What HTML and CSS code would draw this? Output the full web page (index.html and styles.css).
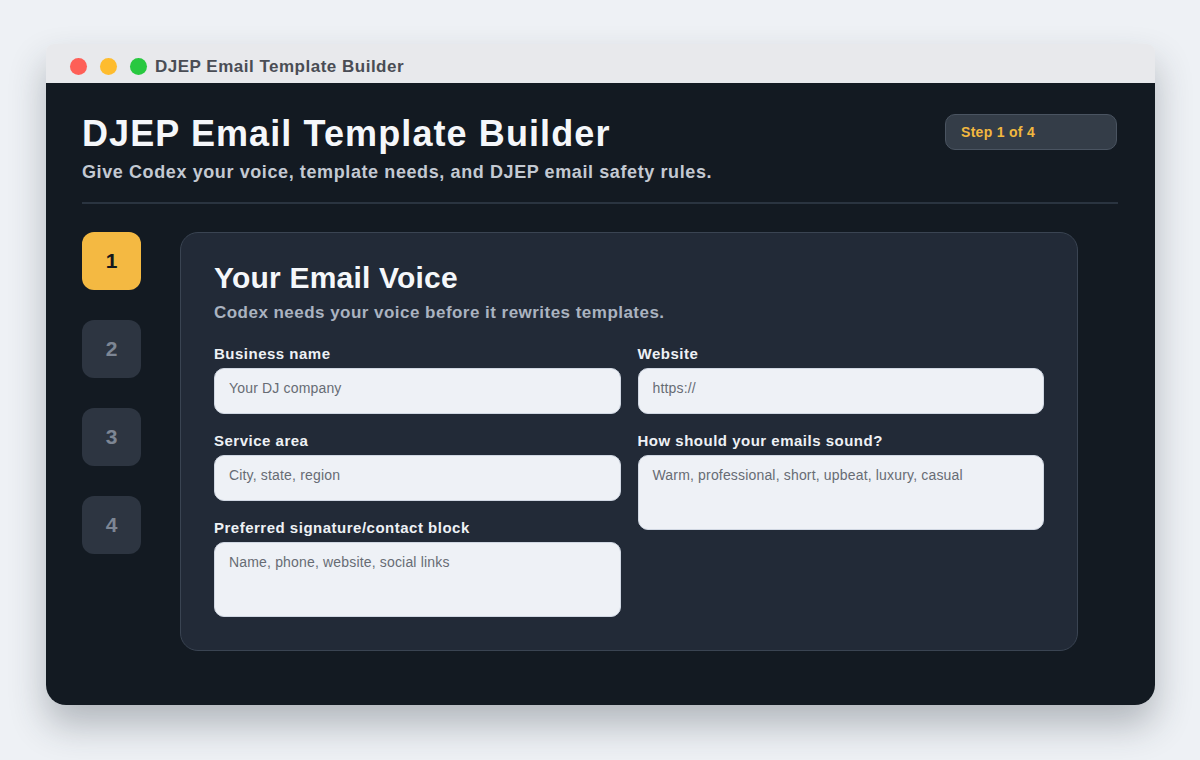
FILE: index.html
```html
<!DOCTYPE html>
<html lang="en">
<head>
  <meta charset="utf-8">
  <title>DJEP Email Template Builder</title>
  <link rel="stylesheet" href="styles.css">
</head>
<body>
  <div class="window">
    <div class="titlebar">
      <span class="dot red"></span>
      <span class="dot yellow"></span>
      <span class="dot green"></span>
      <span class="titlebar-text">DJEP Email Template Builder</span>
    </div>
    <div class="app">
      <header class="app-header">
        <div>
          <h1>DJEP Email Template Builder</h1>
          <p class="lead">Give Codex your voice, template needs, and DJEP email safety rules.</p>
        </div>
        <div class="step-pill">Step 1 of 4</div>
      </header>
      <div class="main">
        <nav class="steps">
          <div class="step active">1</div>
          <div class="step">2</div>
          <div class="step">3</div>
          <div class="step">4</div>
        </nav>
        <section class="card">
          <h2>Your Email Voice</h2>
          <p class="card-sub">Codex needs your voice before it rewrites templates.</p>
          <div class="fields">
            <div class="col">
              <label class="field">
                <span>Business name</span>
                <input type="text" placeholder="Your DJ company">
              </label>
              <label class="field">
                <span>Service area</span>
                <input type="text" placeholder="City, state, region">
              </label>
              <label class="field">
                <span>Preferred signature/contact block</span>
                <textarea placeholder="Name, phone, website, social links"></textarea>
              </label>
            </div>
            <div class="col">
              <label class="field">
                <span>Website</span>
                <input type="text" placeholder="https://">
              </label>
              <label class="field">
                <span>How should your emails sound?</span>
                <textarea placeholder="Warm, professional, short, upbeat, luxury, casual"></textarea>
              </label>
            </div>
          </div>
        </section>
      </div>
    </div>
  </div>
</body>
</html>
```

FILE: styles.css
```css
body {
  margin: 0;
  padding: 44px 0 55px 46px;
  background: #eef1f5;
  font-family: "Liberation Sans", Arial, sans-serif;
}

.window {
  width: 1109px;
  border-radius: 8px 8px 20px 20px;
  overflow: hidden;
  box-shadow: 0 20px 36px rgba(40, 50, 60, 0.3);
}

.titlebar {
  display: flex;
  align-items: center;
  height: 39px;
  box-sizing: border-box;
  padding: 6px 0 0 24px;
  background: #e8e9ec;
}

.dot {
  width: 17px;
  height: 17px;
  border-radius: 50%;
  margin-right: 13px;
}

.red { background: #fe5f57; }
.yellow { background: #febc2e; }
.green { background: #28c840; }

.titlebar-text {
  margin-left: -5px;
  font-size: 17px;
  letter-spacing: 0.5px;
  font-weight: bold;
  color: #4a4d55;
}

.app {
  background: #131a22;
  height: 622px;
  padding: 0 37px 0 36px;
  box-sizing: border-box;
}

.app-header {
  display: flex;
  justify-content: space-between;
  align-items: flex-start;
  padding-top: 29px;
  padding-bottom: 19px;
  border-bottom: 2px solid #2a3440;
}

.app-header h1 {
  margin: 0;
  font-size: 36px;
  letter-spacing: 1.1px;
  line-height: 44px;
  color: #f5f7fa;
}

.lead {
  margin: 6px 0 0;
  font-size: 18px;
  letter-spacing: 0.6px;
  font-weight: bold;
  color: #c3c9d2;
}

.step-pill {
  width: 172px;
  height: 36px;
  box-sizing: border-box;
  margin: 2px 1px 0 0;
  padding: 0 15px;
  line-height: 34px;
  background: #343d48;
  border: 1px solid #4a5461;
  border-radius: 10px;
  font-size: 14px;
  letter-spacing: 0.3px;
  font-weight: bold;
  color: #f2b83f;
}

.main {
  display: flex;
  align-items: flex-start;
  gap: 39px;
  padding-top: 28px;
}

.steps {
  display: flex;
  flex-direction: column;
  gap: 30px;
}

.step {
  width: 59px;
  height: 58px;
  line-height: 58px;
  border-radius: 12px;
  background: #2d3541;
  color: #7d8694;
  text-align: center;
  font-size: 21px;
  font-weight: bold;
}

.step.active {
  background: #f4b942;
  color: #14171c;
}

.card {
  width: 898px;
  box-sizing: border-box;
  padding: 27px 33px 33px;
  background: #222a37;
  border: 1px solid #3a4452;
  border-radius: 18px;
}

.card h2 {
  margin: 0;
  font-size: 30px;
  letter-spacing: 0.2px;
  line-height: 36px;
  color: #f5f7fa;
}

.card-sub {
  margin: 7px 0 0;
  font-size: 17px;
  letter-spacing: 0.47px;
  font-weight: bold;
  color: #aab3c0;
}

.fields {
  display: flex;
  gap: 17px;
  margin-top: 22px;
}

.col {
  flex: 1;
  display: flex;
  flex-direction: column;
  gap: 18px;
}

.field {
  display: flex;
  flex-direction: column;
  gap: 5px;
}

.field span {
  font-size: 15px;
  letter-spacing: 0.5px;
  line-height: 18px;
  font-weight: bold;
  color: #eef1f5;
}

.field input,
.field textarea {
  box-sizing: border-box;
  width: 100%;
  margin: 0;
  padding: 11px 14px;
  border: 1px solid #d0d7e2;
  border-radius: 10px;
  background: #eef1f6;
  font-family: "Liberation Sans", Arial, sans-serif;
  font-size: 14px;
  letter-spacing: 0.17px;
  color: #222;
  resize: none;
}

.field input {
  height: 46px;
  padding-top: 9px;
  padding-bottom: 15px;
}

.field textarea {
  height: 75px;
}

.field input::placeholder,
.field textarea::placeholder {
  color: #676c74;
}
```
